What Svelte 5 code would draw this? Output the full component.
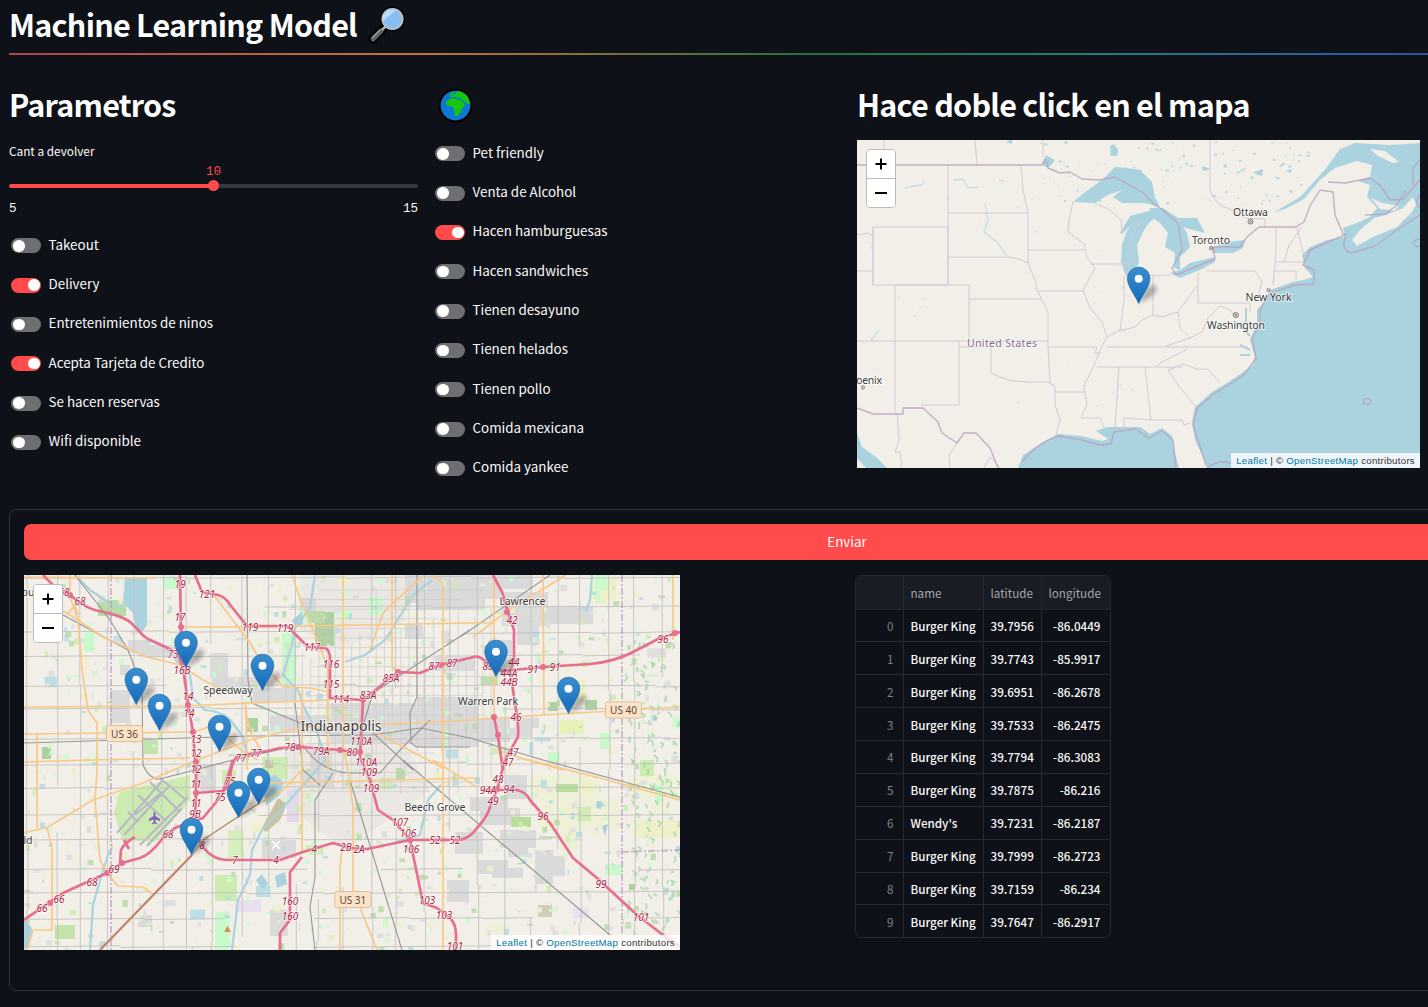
<script>
  const leftToggles = [
    ['Takeout', false], ['Delivery', true], ['Entretenimientos de ninos', false],
    ['Acepta Tarjeta de Credito', true], ['Se hacen reservas', false], ['Wifi disponible', false]
  ];
  const midToggles = [
    ['Pet friendly', false], ['Venta de Alcohol', false], ['Hacen hamburguesas', true],
    ['Hacen sandwiches', false], ['Tienen desayuno', false], ['Tienen helados', false],
    ['Tienen pollo', false], ['Comida mexicana', false], ['Comida yankee', false]
  ];
  const rows = [
    ['Burger King', '39.7956', '-86.0449'], ['Burger King', '39.7743', '-85.9917'],
    ['Burger King', '39.6951', '-86.2678'], ['Burger King', '39.7533', '-86.2475'],
    ['Burger King', '39.7794', '-86.3083'], ['Burger King', '39.7875', '-86.216'],
    ["Wendy's", '39.7231', '-86.2187'], ['Burger King', '39.7999', '-86.2723'],
    ['Burger King', '39.7159', '-86.234'], ['Burger King', '39.7647', '-86.2917']
  ];
  const pins = [
    [186, 667.5], [136.3, 704.5], [159.5, 730.5], [219.5, 751.5], [262.5, 690.5],
    [496, 676.5], [568.5, 713.5], [258.7, 804.5], [238.5, 817.5], [191.5, 854.5]
  ];

  // Small deterministic generator for the street texture and land-use patches
  let seed = 71;
  const rnd = () => ((seed = (seed * 16807) % 2147483647) / 2147483647);

  const streets = [];
  for (let i = 0; i < 26; i++) {
    const x = 30 + i * 26.3 + (rnd() - 0.5) * 6;
    let y = 575;
    while (y < 950) {
      const len = 40 + rnd() * 110;
      if (rnd() > 0.2) streets.push(`M${(x + (rnd() - 0.5) * 2).toFixed(1)} ${y.toFixed(1)}v${len.toFixed(1)}`);
      y += len;
    }
  }
  for (let i = 0; i < 15; i++) {
    const y = 580 + i * 26.2 + (rnd() - 0.5) * 5;
    let x = 24;
    while (x < 680) {
      const len = 50 + rnd() * 120;
      if (rnd() > 0.2) streets.push(`M${x.toFixed(1)} ${(y + (rnd() - 0.5) * 2).toFixed(1)}l${len.toFixed(1)} -1`);
      x += len;
    }
  }
  const fineStreets = [];
  for (let i = 0; i < 26; i++) {
    const x = 286 + i * 8.2;
    const y = 578 + rnd() * 90;
    fineStreets.push(`M${x.toFixed(1)} ${y.toFixed(1)}V${(720 + rnd() * 80).toFixed(1)}`);
  }
  for (let i = 0; i < 22; i++) {
    const y = 590 + i * 9.6;
    const x = 286 + rnd() * 50;
    fineStreets.push(`M${x.toFixed(1)} ${y.toFixed(1)}H${(400 + rnd() * 90).toFixed(1)}`);
  }
  const tones = ['#c8facc', '#cdebb0', '#b9dba9', '#dcdcdb', '#dcdcdb', '#eef0d5', '#eef0c9', '#b5dbe4', '#d5f3d3'];
  const patches = [];
  for (let i = 0; i < 1000; i++) {
    const big = rnd() > 0.96;
    patches.push({
      x: 24 + rnd() * 655, y: 575 + rnd() * 373,
      w: 1.5 + rnd() * (big ? 18 : 5), h: 1.5 + rnd() * (big ? 13 : 5.5),
      c: tones[Math.floor(rnd() * tones.length)]
    });
  }
  // tufts of woodland along the eastern edge
  const woods = [];
  for (let i = 0; i < 130; i++) {
    const x = 625 + rnd() * 54, y = 640 + rnd() * 300;
    woods.push(`M${x.toFixed(1)} ${y.toFixed(1)}l${(rnd() * 4).toFixed(1)} ${(1 + rnd() * 3).toFixed(1)}l${(-rnd() * 3).toFixed(1)} ${(rnd() * 4).toFixed(1)}`);
  }
  const blocks = [
    [405,575,75,28],[417,590,68,20],[483,575,50,14],[502,592,46,34],[517,615,22,30],[548,606,45,18],[470,575,30,24],
    [300,598,16,18],[110,690,20,33],[210,653,18,26],[212,677,45,16],[253,688,44,14],[330,703,86,40],[417,697,62,50],
    [380,710,40,34],[270,715,60,18],[196,765,20,20],[198,775,18,16],[455,718,55,24],[515,718,24,10],[500,728,32,9],
    [470,797,38,14],[480,808,40,17],[455,832,28,22],[500,830,36,18],[508,843,20,14],[505,775,22,24],[478,860,30,14],[492,868,31,10],
    [535,850,18,34],[548,856,17,20],[447,880,22,22],
    [262,840,34,18],[270,910,18,26],[310,750,22,32],[300,770,34,18],[435,655,40,16],[405,625,18,14],[488,640,24,16],
    [138,915,14,12],[128,640,22,12],[140,645,40,12],[120,665,10,10]
  ];
  const parks = [
    [530,775,70,25,'#eef0d8'],[540,800,80,30,'#eef0d8'],[628,775,50,24,'#eef0d8'],
    [315,612,19,34,'#add19e'],[307,611,18,12,'#b9dba9'],[98,600,28,16,'#b9dba9'],[84,632,10,20,'#c8facc'],[163,577,16,12,'#c8facc'],
    [368,597,14,18,'#c8facc'],[340,610,12,10,'#c8facc'],[282,633,14,55,'#c8facc'],[548,702,10,9,'#add19e'],[585,700,12,10,'#add19e'],
    [560,680,26,22,'#eef0c9'],[590,578,26,22,'#eef0c9'],[595,575,12,28,'#c8facc'],[560,720,24,14,'#e6f2b5'],[548,752,12,10,'#c8facc'],
    [600,733,10,16,'#c8facc'],[42,747,9,12,'#add19e'],[144,740,14,14,'#c3e3ab'],[246,718,12,14,'#add19e'],[511,817,20,10,'#b8df9a'],
    [605,864,18,11,'#c8facc'],[629,884,6,6,'#add19e'],[633,820,46,18,'#eef0c9'],[640,760,14,16,'#cdebb0'],[655,785,8,22,'#c8facc'],
    [556,784,22,8,'#b8df9a'],[582,780,10,13,'#eef0c9'],[538,905,14,12,'#cfcdb8'],[573,908,16,10,'#e9dff0'],[215,912,15,38,'#c8facc'],[222,770,14,14,'#cfecb3'],
    [262,757,26,22,'#cfecb3'],[287,790,12,32,'#e6d8ec'],[235,900,26,12,'#e9dff0'],[215,875,22,26,'#cdebb0'],[228,830,16,30,'#d7efbd'],
    [265,760,8,8,'#c9c2a0'],[55,925,20,14,'#c3e3ab'],[396,768,9,11,'#b9dba9'],[560,830,18,20,'#eef0d5'],[600,590,10,14,'#eef0c9']
  ];

  const pink = [
    'M43 575L55 587L70 595C85 608 95 611 103 612S125 618 130 622S140 633 145 637S170 648 177 653L183 667L188 703L193 732L196 770V793L195 820',
    'M180 575L181 630L183 667',
    'M195 575L202 592L218 595C226 597 228 602 231 606L247 626H287L308 647L324 648Q329 648 330 657V698L363 700L398 672L420 673L440 665L470 658Q478 654 485 661L490 668L503 671L543 667L590 664Q615 662 637 650L660 638L680 632',
    'M363 700L360 757L370 780L378 810L393 820L410 840L423 903L437 908L450 918Q456 924 456 935V950',
    'M360 753L340 750L300 747L280 748C265 752 255 754 240 755C233 757 230 770 230 780Q227 791 222 791L196 793',
    'M233 760L222 795L203 818L177 827C168 832 163 838 163 838Q150 855 140 858L122 863L107 873L63 893L24 920',
    'M195 820L198 838L203 847Q213 860 228 860H280L303 852L333 843L350 848L367 849L410 840L460 840Q470 838 477 828Q488 816 490 807L497 790L505 760L518 737Q519 722 516 710L513 690L510 670L514 663V630L508 612L502 592L493 575',
    'M483 790L497 790L517 790Q526 792 530 800L550 823L573 858L597 878L637 915L663 935L682 948',
    'M494 717L498 737L503 770',
    'M120 863L121 850Q124 843 135 837M124 840L129 849',
    'M302 857L290 872V920L280 933V950'
  ];
  const orange = [
    'M24 577L155 578', 'M70 575V597L78 620L82 670L88 710L97 723V770L95 800L100 860L107 873L118 886L143 887L152 893',
    'M24 592L67 613L103 637L147 657L180 665L203 680L228 692', 'M67 615L75 605L78 615', 'M24 707L185 706L250 703L330 700',
    'M24 734L193 732L225 722', 'M24 833L48 827L93 800L143 783L197 760L250 740L300 728L373 725L470 720L543 715L680 707',
    'M37 734V828', 'M47 828L52 847V930H33L27 950', 'M24 762L90 760L190 758', 'M180 627H250L470 623H494',
    'M292 575L297 590L318 643L328 668V770', 'M210 590L250 643L260 660L283 687L310 688L330 692',
    'M343 575V745L348 770L353 807V890L377 950', 'M392 575V667L398 672', 'M422 577L393 603L383 613L376 632L370 650',
    'M432 575L443 583V950', 'M494 575V717', 'M543 575L544 715', 'M566 575L513 607L473 637', 'M673 575V640',
    'M377 733L443 768', 'M503 753L563 770', 'M520 758L600 778L680 800', 'M433 760L477 787', 'M267 783L350 781L477 778',
    'M302 690V852', 'M302 770L283 790L253 807', 'M342 847L340 870V950', 'M246 706L247 770', 'M225 735Q240 752 258 760', 'M245 702Q246 718 252 735L262 752'
  ];
  const rails = [
    'M75 575L110 620L128 650L142 687L143 765Q150 780 160 779L233 760L300 745', 'M63 615L128 650', 'M24 743L250 736L373 735L420 728L470 738L543 760L680 797',
    'M470 630L373 693L360 735', 'M550 575L460 637', 'M247 575L248 680L252 703L300 723L330 733', 'M295 703L303 770L320 785',
    'M373 733L413 770L403 760L610 935', 'M350 780L402 950', 'M333 773L315 800V877L310 907L315 950', 'M417 575V697L410 713L411 743L417 747H470',
    'M303 745Q320 772 350 773L380 773L400 750L430 720'
  ];
  const rivers = [
    'M75 575L90 590L105 600L122 608M150 640Q168 645 176 660L190 675L193 698L205 710Q225 712 232 722L243 737L248 760',
    'M315 575L310 608L295 628L292 645L283 675L298 690L303 705L318 735L325 760L290 800L262 830L252 850L250 875L238 900L232 950',
    'M432 580L413 595L385 640L365 655L345 662', 'M592 575L590 600L586 612', 'M110 850L103 870L93 905L90 950', 'M441 785L428 800L420 835L395 842'
  ];
  const exits = [
    ['68', 64, 596], ['68', 80, 605], ['19', 180, 588], ['17', 180, 621], ['121', 207, 598], ['119', 250, 631], ['119', 285, 632],
    ['117', 312, 651], ['116', 331, 668], ['115', 331, 688], ['114', 341, 703], ['83A', 368, 699], ['85A', 391, 682], ['87', 434, 670], ['87', 452, 667],
    ['89', 488, 670], ['42', 512, 624], ['44', 514, 666], ['44A', 509, 677], ['44B', 509, 686], ['91', 533, 673], ['91', 555, 671], ['96', 663, 643],
    ['46', 516, 721], ['47', 513, 756], ['47', 508, 766], ['48', 498, 783], ['94A', 488, 794], ['94', 509, 793], ['49', 493, 805], ['96', 543, 820],
    ['99', 601, 888], ['101', 641, 921], ['73', 173, 658], ['16B', 182, 674], ['14', 188, 700], ['14', 189, 717], ['13', 196, 743], ['12', 196, 757], ['12', 196, 773],
    ['11', 196, 788], ['11', 196, 807], ['9B', 195, 818], ['75', 230, 785], ['75', 220, 801], ['77', 241, 762], ['77', 256, 757], ['78', 290, 751], ['79A', 321, 755],
    ['80', 352, 756], ['110A', 361, 745], ['110A', 366, 766], ['109', 369, 776], ['109', 371, 792], ['107', 400, 826], ['106', 408, 837], ['106', 411, 853],
    ['52', 435, 844], ['52', 455, 844], ['2B', 346, 851], ['2A', 359, 853], ['103', 427, 904], ['103', 444, 919], ['101', 455, 950],
    ['68', 168, 838], ['8', 202, 849], ['7', 235, 864], ['4', 276, 864], ['4', 314, 853], ['69', 114, 873], ['68', 92, 886], ['66', 59, 903], ['66', 42, 912],
    ['160', 290, 905], ['160', 290, 920]
  ];
  const knots = [[70,595],[181,627],[183,663],[188,705],[193,732],[196,762],[196,793],[363,700],[398,672],[494,717],[498,735],[410,840],[497,789],[107,873],[50,903],[543,667],[675,633],[122,863],[360,752],[340,750],[507,612],[298,747],[441,665]];

  const stateLines = [
    'M884 140V165M975 140L977 165', 'M948 165V285M948 213H1028', 'M873 227H948V285H873ZM873 227V285', 'M857 235L868 233L873 236', 'M857 271H873',
    'M895 285V413M895 285H969V340M969 299H1041M948 257H1008Q1020 258 1028 263', 'M857 341H1048M959 341V347H991V373L1000 377L1012 381L1030 382L1048 382L1054 386',
    'M959 347V405H921', 'M1021 165L1023 190L1028 213V263L1035 280L1037 290L1048 312V347L1050 383L1055 387V405L1060 420L1056 435',
    'M1028 250H1084M1037 291H1083', 'M1073 202L1069 220L1068 232L1084 244L1087 257L1095 268L1083 290L1090 308L1102 322L1107 337L1100 350L1092 370L1084 385L1087 405L1081 418H1101L1103 428',
    'M1090 264H1129M1124 276V300L1120 330L1107 337', 'M1048 347H1097L1095 353H1101', 'M1055 392H1085', 'M1097 367H1183M1107 347H1248M1119 367L1115 428M1145 367L1151 420L1124 418V428M1151 420H1182L1184 425L1190 423',
    'M1119 331L1135 327L1142 320L1153 315L1162 317L1178 312L1190 295L1198 285', 'M1153 275V315M1140 276L1170 275M1198 273V303H1250V312M1207 271H1255L1262 282L1258 296L1264 304',
    'M1178 312L1180 328L1190 338L1202 332L1208 318L1220 306L1230 310L1236 318M1190 338L1166 346M1186 346V350L1160 363L1157 367M1168 370L1184 364L1196 369H1208L1220 383M1168 370L1178 385L1195 406',
    'M1276 228V252L1273 285M1297 227L1300 240L1303 253M1276 262H1307M1273 271H1296V280M1302 227L1289 245L1284 262', 'M1095 203L1110 210L1121 220L1122 232M1130 226L1140 222L1130 240V262L1127 276',
    'M1043 140V157M897 413L899 440L895 452H900L902 468M957 443L949 455L950 468M984 468L990 457L1000 468', 'M1210 140V190Q1214 205 1230 209L1245 218L1265 219V227'
  ];
  const borders = [
    'M857 165H1042L1045 159L1048 168L1060 173L1070 172L1082 179L1100 180L1115 177L1142 192L1155 205L1163 210L1178 223L1182 250L1172 268L1176 275L1195 267L1215 259L1213 247L1240 247L1247 237L1259 227H1296L1304 222L1310 206L1320 190L1333 192L1335 215L1344 236',
    'M857 408L873 414H903V408H923L938 422L942 433L957 443L964 433H976L990 448L998 468',
    'M1328 182L1345 183L1370 178L1380 185L1390 200L1403 199L1420 180M1351 253Q1340 250 1346 234L1340 237L1310 250L1303 265L1314 270V284L1295 285L1270 293L1260 310L1260 325L1252 338L1256 358L1244 375L1214 394L1197 408L1193 425L1206 465M1351 253L1375 246L1400 228L1420 215M1365 215L1385 214L1396 206L1406 190',
    'M1022 462Q1040 440 1060 436L1082 440L1100 445L1111 444L1114 432L1135 429L1149 438L1162 431L1173 440L1176 468'
  ];
  const lakes = [
    'M1073 202L1088 190L1102 180L1115 167L1127 168L1140 170L1152 182L1155 197L1160 207L1145 203L1122 203L1113 197L1122 190L1108 195L1095 203Z',
    'M1120 233L1130 216L1145 212L1158 208L1155 218L1148 224L1143 232L1137 245L1139 262L1134 272L1126 276L1121 262L1122 245L1126 233L1130 226L1122 234Z',
    'M1150 208L1163 208L1178 218L1197 218L1205 233L1193 230L1183 227L1187 233L1190 247L1180 257L1180 270L1174 268L1175 253L1165 247L1168 233L1160 223L1150 216Z',
    'M1170 273L1180 270L1190 263L1215 257V262L1200 270L1180 278Z', 'M1212 248L1227 242L1245 240L1243 248L1233 253L1212 253Z',
    'M1110 146L1114 144L1118 150L1117 156L1111 156ZM1042 165L1046 155L1055 160L1048 168Z',
    'M1006 142L1012 139L1012 144ZM1254 172L1263 169L1262 176L1255 174ZM1285 171L1292 169L1291 173ZM1202 166L1211 169L1203 171Z'
  ];
  const speckles = Array.from({ length: 150 }, () => {
    const north = rnd() > 0.25;
    return [north ? 1040 + rnd() * 270 : 865 + rnd() * 280, north ? 142 + rnd() * 62 : 190 + rnd() * 230, 0.4 + rnd() * 1, north ? 0.8 : 0.4];
  });
</script>

{#snippet pin(x, y)}
  <g transform="translate({x} {y})">
    <path d="M0 0L6-12Q12-21 18-17Q19-11 10-5Z" fill="#000" opacity=".28" filter="url(#soft)" />
    <path d="M0 0C-2.5-6.500-11.300-17-11.300-25A11.300 11.300 0 0 1 11.300-25C11.300-17 2.500-6.500 0 0Z" fill="url(#pinFill)" stroke="#2b74ae" stroke-width=".8" />
    <circle cy="-24.800" r="4" fill="#fff" />
  </g>
{/snippet}

{#snippet controls()}
  <div class="zoom"><button aria-label="Zoom in"><svg viewBox="0 0 12 12"><path d="M6 .5v11M.5 6h11" /></svg></button><button aria-label="Zoom out"><svg viewBox="0 0 12 12"><path d="M0 6h12" /></svg></button></div>
  <div class="credit"><a href="#leaflet">Leaflet</a> | © <a href="#osm">OpenStreetMap</a> contributors</div>
{/snippet}

{#snippet toggle(label, on)}
  <label class="toggle"><span class="track" class:on></span><span>{label}</span></label>
{/snippet}

<main>
  <h1>Machine Learning Model
    <svg class="lens" viewBox="0 0 38 38">
      <path d="M5 33L17 21" stroke="#000" stroke-width="9" stroke-linecap="round" />
      <circle cx="24.500" cy="13" r="12.500" fill="#000" />
      <path d="M5 33L13 25" stroke="#5d6468" stroke-width="5" stroke-linecap="round" />
      <path d="M4.500 31.500L12 24" stroke="#929a9d" stroke-width="1.500" stroke-linecap="round" />
      <path d="M14 24L18 20" stroke="#a8b0b4" stroke-width="2.500" />
      <circle cx="24.500" cy="13" r="10.300" fill="#86c0f0" stroke="#c2c6c8" stroke-width="1.500" />
      <path d="M15 15A9.500 9.500 0 0 1 28 4.300Z" fill="#b5dcfa" />
    </svg>
  </h1>
  <div class="rainbow"></div>

  <section class="columns">
    <div class="col">
      <h2>Parametros</h2>
      <div class="slider">
        <span class="caption">Cant a devolver</span>
        <span class="value">10</span>
        <div class="rail"><span class="thumb"></span></div>
        <div class="limits"><span>5</span><span>15</span></div>
      </div>
      {#each leftToggles as [label, on]}{@render toggle(label, on)}{/each}
    </div>
    <div class="col">
      <h2>
        <svg class="globe" viewBox="0 0 36 36">
          <circle cx="18" cy="18" r="17.500" fill="#000" />
          <circle cx="18" cy="18" r="15.300" fill="#0d78d4" />
          <path d="M9 13.500L12 11L17 10.500L20 12L25 12.500L28 18L24 21L23 25L20 29L17.500 28.500L16.500 23L15 19L10 18.500L8 16Z" fill="#16c60c" />
          <path d="M19 3.500Q26 3 31 9.500L33.200 16L30 16.500L27 13.500L23 11.500L18 9.500L15 10L12.500 9L16 6.500L19 5.500Z" fill="#16c60c" />
          <path d="M12 6.500L15 4L17 4.500L14 7.500L11.500 8ZM24.500 24.500L26 22.500L25.500 26.500Z" fill="#16c60c" />
          <path d="M14 10.200L19 9.500L24 11M24.500 12L28 18" stroke="#0d78d4" stroke-width=".8" fill="none" />
        </svg>
      </h2>
      {#each midToggles as [label, on]}{@render toggle(label, on)}{/each}
    </div>
    <div class="col">
      <h2>Hace doble click en el mapa</h2>
      <div class="map country">
        <svg viewBox="857 140 563 328">
          <defs>
            <linearGradient id="pinFill" x1="0" y1="0" x2="0" y2="1"><stop offset="0" stop-color="#3a8fd0" /><stop offset="1" stop-color="#1669b8" /></linearGradient>
            <filter id="soft" x="-50%" y="-50%" width="200%" height="200%"><feGaussianBlur stdDeviation="2" /></filter>
          </defs>
          <rect x="857" y="140" width="563" height="328" fill="#f2efe9" />
          <g fill="#aad3df">
            <path d="M1420 143L1390 145L1355 143L1340 149L1327 167L1313 183L1300 197L1273 213L1285 209L1304 199L1320 180L1335 168L1357 161L1372 165L1370 177L1358 181L1370 185L1367 197L1377 208L1370 217L1357 223L1343 228L1345 237L1327 240L1310 247L1302 255L1305 268L1313 277L1303 280L1293 282L1270 290L1263 303L1257 310V323L1250 340L1255 357L1253 365L1243 372L1227 383L1212 392L1195 407L1192 422L1195 440L1203 457L1207 468H1420Z" />
            <path d="M1018 468L1023 455L1042 443L1058 434L1082 436L1102 441L1108 439L1096 431L1107 427L1140 427L1150 434L1162 428L1172 436L1175 453L1179 468ZM857 433L862 447L876 457L887 468H866L857 458Z" />
            {#each lakes as d}<path {d} />{/each}
            {#each speckles as s}<ellipse cx={s[0]} cy={s[1]} rx={s[2] * 1.3} ry={s[2]} opacity={s[3]} />{/each}
          </g>
          <path d="M1352 240L1360 230L1374 218L1386 215L1403 208L1413 197L1416 205L1411 213L1397 227L1373 237L1357 246Z" fill="#f2efe9" />
          <path d="M1370 149L1385 151L1399 162L1393 163L1378 156ZM1371 198L1382 203L1399 206L1394 211L1380 209Z" fill="#f2efe9" />
          <path d="M905 188L914 186L922 185L924 181M954 180L963 179L968 188L978 187M999 180L1004 181M985 203L988 220L984 232L997 242L1007 256M871 340L879 330" fill="none" stroke="#c3dfe6" stroke-width="1.300" />
          <path d="M1246 308V322L1240 325L1250 336M1240 355H1250M1240 345L1250 350" fill="none" stroke="#aad3df" stroke-width="2" />
          <g fill="none" stroke="#d6c8d3" stroke-width="1">{#each stateLines as d}<path {d} />{/each}</g>
          <g fill="none" stroke="#b9a0bd" stroke-width="1.400" stroke-linejoin="round" opacity=".8">{#each borders as d}<path {d} />{/each}<ellipse cx="1367" cy="401.500" rx="3.800" ry="3" /><path d="M1207 468Q1220 458 1232 464M1420 195Q1414 202 1420 208M1420 239Q1412 240 1414 244Q1416 248 1420 246M1420 160L1413 168V185" /></g>
          <g class="place">
            <text x="1250.500" y="216" textLength="35">Ottawa</text><text x="1211" y="244" textLength="38">Toronto</text>
            <text x="1268.500" y="301" textLength="46">New York</text><text x="1236" y="329" textLength="58">Washington</text>
            <text x="863" y="383.500" textLength="38">Phoenix</text>
            <text x="1002" y="347" textLength="70" class="nation">United States</text>
          </g>
          <g fill="#eee" stroke="#555" stroke-width=".8"><circle cx="1250.500" cy="221.500" r="2.500" /><circle cx="1250.500" cy="221.500" r=".7" /><circle cx="1235.800" cy="315" r="2.500" /><circle cx="1235.800" cy="315" r=".7" /><circle cx="1211" cy="248" r="1.500" /><circle cx="1268.500" cy="290" r="1.500" /><circle cx="863" cy="387.500" r="1.500" /></g>
          {@render pin(1138.7, 303.5)}
        </svg>
        {@render controls()}
      </div>
    </div>
  </section>

  <section class="form">
    <button class="submit">Enviar</button>
    <div class="results">
      <div class="map city">
        <svg viewBox="24 575 656 375">
          <rect x="24" y="575" width="656" height="375" fill="#f2efe9" />
          <path d="M285 745L400 735L430 790L345 850L280 800ZM300 575H405V620L340 650L300 630Z" fill="#e4e2df" opacity=".5" />
          {#each blocks as b}<rect x={b[0]} y={b[1]} width={b[2]} height={b[3]} fill="#dbdadb" />{/each}
          {#each parks as p}<rect x={p[0]} y={p[1]} width={p[2]} height={p[3]} fill={p[4]} />{/each}
          {#each patches as p}<rect x={p.x} y={p.y} width={p.w} height={p.h} fill={p.c} opacity=".85" />{/each}
          <path d="M114 812L120 792L190 775V800L155 842L122 840Z" fill="#cdebb0" />
          <g stroke="#b7b7c6" stroke-width="2" fill="none"><path d="M117 833L162 781M124 835L170 785M140 845L188 797M147 846L182 808M135 815L162 792M150 782L180 812M138 795L165 820M160 778L186 800M128 812L138 822" /></g>
          <path d="M125 577H147V625L142 632L136 628L133 613L123 603Z M262 780L275 775L284 782L280 795L266 806ZM256 880L262 874L268 884L262 890ZM275 876L285 872L287 884L277 888ZM292 620L302 612L303 624L296 628ZM24 920L32 928L30 945L24 950ZM597 801L603 802L601 809L596 808ZM602 826L608 824L605 836Z" fill="#aad3df" />
          <path d="M262 828L278 798L287 804L280 820L266 832Z" fill="#c9c2a0" />
          <g stroke="#8fcf95" stroke-width="1.800" fill="none" opacity=".6">{#each woods as d}<path {d} />{/each}</g>
          <g fill="none" stroke="#aad3df" stroke-width="2.200" stroke-linejoin="round">{#each rivers as d}<path {d} />{/each}</g>
          <path d={fineStreets.join('')} stroke="#cfcccb" stroke-width=".7" fill="none" />
          <path d={streets.join('')} stroke="#c4c2c1" stroke-width=".9" fill="none" />
          <g fill="none" stroke="#969696" stroke-width="1.100">{#each rails as d}<path {d} />{/each}</g>
          <path d="M111 575V950M622 575V950M622 852L680 850" stroke="#b49ab8" stroke-width="1.500" stroke-dasharray="7 2 2 2" fill="none" opacity=".8" />
          <g fill="none" stroke="#f9c887" stroke-width="1.700" stroke-linejoin="round">{#each orange as d}<path {d} />{/each}</g>
          <path d="M192 855L100 950" stroke="#e58a76" stroke-width="2.300" /><path d="M258 804L230 822L203 840L192 855L100 950" stroke="#a9876a" stroke-width="1.200" fill="none" />
          <g fill="none" stroke="#e56f8d" stroke-width="2.700" stroke-linejoin="round">{#each pink as d}<path {d} />{/each}</g>
          <g fill="#e56f8d">{#each knots as k}<circle cx={k[0]} cy={k[1]} r="3" />{/each}</g>
          <g class="exit">{#each exits as e}<text x={e[1]} y={e[2]}>{e[0]}</text>{/each}</g>
          <g class="place">
            <text x="228" y="694" textLength="49">Speedway</text><text x="522.500" y="604.500" textLength="46">Lawrence</text>
            <text x="488" y="705" textLength="60">Warren Park</text><text x="435" y="811" textLength="61">Beech Grove</text>
            <text x="341" y="731" textLength="81" class="capital">Indianapolis</text>
            <text x="28" y="843.500">ld</text><text x="28" y="596">ou</text>
          </g>
          {#each [[124.500, 733.500, 'US 36'], [623.500, 710, 'US 40'], [352.800, 899.500, 'US 31']] as s}
            <rect x={s[0] - 18} y={s[1] - 8} width="36" height="16" rx="2" fill="#fbe3c8" stroke="#dfbf9c" />
            <text class="shield" x={s[0]} y={s[1] + 4}>{s[2]}</text>
          {/each}
          <path d="M153.500 812Q155 811 155.500 814V816L160 819V821L155.500 819.500V822L157 823.500V824.500L154.500 823.500L152 824.500V823.500L153.500 822V819.500L149 821V819L153.500 816Z" fill="#8461c4" />
          <path d="M224 932L227.500 926L231 932Z" fill="#d08f55" />
          <path d="M272 841L280 849M280 841L272 849" stroke="#fff" stroke-width="1.500" />
          {#each pins as p}{@render pin(p[0], p[1])}{/each}
        </svg>
        {@render controls()}
      </div>
      <table>
        <thead><tr><th></th><th>name</th><th>latitude</th><th>longitude</th></tr></thead>
        <tbody>
          {#each rows as row, i}<tr><td>{i}</td>{#each row as cell}<td>{cell}</td>{/each}</tr>{/each}
        </tbody>
      </table>
    </div>
  </section>
</main>

<style>
  :global(body) { background: #0e1117; overflow: hidden; }
  main {
    width: 100%; height: 1007px; padding-left: 9px; box-sizing: border-box; overflow: hidden; color: #fafafa;
    font-family: "Noto Sans CJK SC", "Noto Sans", sans-serif; font-size: 13px; background: #0e1117;
  }
  h1, h2 { margin: 0; font-size: 30.500px; letter-spacing: -.75px; font-weight: 700; color: #fff; display: flex; align-items: center; white-space: nowrap; }
  h1 { height: 47px; padding-bottom: 6px; line-height: 46px; gap: 11px; }
  .lens { width: 38px; height: 38px; margin-top: 3px; flex: none; }
  .rainbow { height: 2px; width: 1676px; background: linear-gradient(90deg, #a34a50 0, #c6703a 24%, #24713c 48%, #2a7b7a 65%, #3053a4 84%, #6b45a8 100%); }
  .columns { display: grid; grid-template-columns: 409px 409px 828px; gap: 15px; height: 424px; padding-top: 30px; }
  .col { min-width: 0; display: flex; flex-direction: column; }
  h2 { height: 48.600px; line-height: 42px; padding-bottom: 10px; box-sizing: border-box; flex: none; }
  .globe { width: 35px; height: 35px; margin: 2px 0 0 4.500px; }
  .slider { display: flex; flex-direction: column; height: 92px; padding-top: 6px; width: 409px; box-sizing: border-box; flex: none; }
  .caption { font-size: 11.800px; line-height: 22px; }
  .value { font: 12.600px/14px "Liberation Mono", monospace; color: #ff4b4b; text-align: center; margin-top: 3px; }
  .rail { height: 4px; margin-top: 5px; border-radius: 2px; background: linear-gradient(90deg, #ff4b4b 50%, #35383f 50%); display: flex; align-items: center; justify-content: center; flex: none; }
  .thumb { width: 11px; height: 11px; border-radius: 50%; background: #ff4b4b; }
  .limits { display: flex; justify-content: space-between; margin-top: 13px; font: 12.600px/16px "Liberation Mono", monospace; }
  .toggle { display: flex; align-items: center; height: 39.330px; gap: 7.500px; padding-left: 2px; flex: none; font-size: 13.400px; line-height: 20px; }
  .toggle span:last-child { margin-top: -3px; }
  .track { width: 26.500px; height: 15px; margin-top: 1px; padding: 0 1.500px 0 2px; border-radius: 8px; background: #6d6f73; display: flex; align-items: center; }
  .track::before { content: ""; width: 11.500px; height: 11.500px; border-radius: 50%; background: #fff; }
  .track.on { background: #ff4b4b; justify-content: flex-end; }
  .map { position: relative; overflow: hidden; flex: none; }
  .map > svg { display: block; width: 100%; height: 100%; }
  .country { width: 563px; height: 328px; margin-top: 6.400px; }
  .city { width: 656px; height: 375px; }
  .zoom { position: absolute; left: 9.400px; top: 9px; width: 28px; border: 1px solid #bbb; border-radius: 4px; overflow: hidden; background: #fff; }
  .zoom button { display: flex; width: 28px; height: 28px; border: 0; padding: 0; background: #fff; align-items: center; justify-content: center; }
  .zoom button + button { border-top: 1px solid #bbb; height: 29px; }
  .zoom svg { width: 12px; height: 12px; stroke: #000; stroke-width: 2; }
  .credit { position: absolute; right: 0; bottom: 0; padding: 0 5px; font: 9.700px/15px "Liberation Sans", Arial, sans-serif; letter-spacing: .27px; color: #333; background: rgba(255,255,255,.8); white-space: nowrap; }
  .credit a { color: #0078a8; text-decoration: none; }
  .place text { font: 10.500px "Noto Sans", sans-serif; fill: #3c3c3c; text-anchor: middle; paint-order: stroke; stroke: rgba(255,255,255,.65); stroke-width: 2px; }
  .place .nation { fill: #876891; font-size: 10.500px; }
  .place .capital { font-size: 14px; }
  .exit text { font: italic 10px "Noto Sans", sans-serif; fill: #a92546; text-anchor: middle; paint-order: stroke; stroke: rgba(255,255,255,.75); stroke-width: 1.500px; }
  .shield { font: 10px "Noto Sans", sans-serif; fill: #5f4934; text-anchor: middle; }
  .form { height: 480px; width: 1674px; border: 1px solid #31343c; border-radius: 7px; }
  .submit { display: block; width: 1646px; height: 35.500px; margin: 14px 14px 15px; border: 0; border-radius: 7px; background: #ff4b4b; color: #fff; font: 13.400px/20px "Noto Sans CJK SC", sans-serif; padding: 0 0 2px; }
  .results { display: grid; grid-template-columns: 1fr 1fr; gap: 15px; margin: 0 14px; align-items: start; }
  table { width: 256px; border: 1px solid #262932; border-radius: 7px; border-spacing: 0; table-layout: fixed; overflow: hidden; font-size: 11.650px; line-height: 16px; }
  th, td { padding: 1px 9px 0 7px; height: 31px; text-align: right; border-right: 1px solid #262932; border-bottom: 1px solid #262932; font-weight: 500; white-space: nowrap; }
  td { height: 30.880px; }
  th { height: 32px; background: #1a1c24; color: #a3a6ad; font-weight: 400; }
  th:nth-child(1) { width: 31px; } th:nth-child(2) { width: 64px; } th:nth-child(3) { width: 42px; }
  th:nth-child(2), td:nth-child(2) { text-align: left; padding-right: 8px; }
  th:nth-child(3), td:nth-child(3) { padding-right: 8px; }
  td:first-child { color: #7f8289; font-weight: 400; }
  th:last-child, td:last-child { border-right: 0; }
  tr:last-child td { border-bottom: 0; }
  thead tr:last-child th { border-bottom: 1px solid #262932; }
</style>
